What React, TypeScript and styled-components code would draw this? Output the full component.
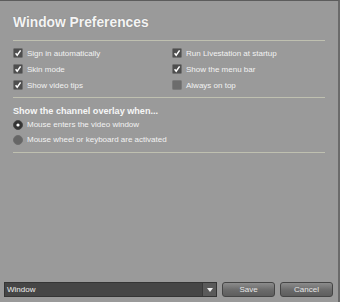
import React from "react";
import styled, { createGlobalStyle } from "styled-components";

const Global = createGlobalStyle`
  html, body { margin: 0; padding: 0; }
  body { background: #9a9a9a; font-family: "Liberation Sans", Arial, sans-serif; }
`;

const Window = styled.div`
  box-sizing: border-box;
  width: 340px;
  height: 302px;
  background: #9a9a9a;
  border-top: 1px solid #5c5c5c;
  border-right: 2px solid #6a6a6a;
  display: flex;
  flex-direction: column;
`;

const Main = styled.div`
  padding: 14px 13px 0 13px;
  display: flex;
  flex-direction: column;
`;

const Title = styled.h1`
  margin: 0;
  font-size: 13.8px;
  line-height: 16px;
  font-weight: bold;
  color: #f4f4f4;
  text-shadow: 0 0 1px rgba(90, 90, 90, 0.5);
`;

const Divider = styled.div<{ $top: number; $bottom: number }>`
  height: 1px;
  background: #bfc0b0;
  margin-top: ${(p) => p.$top}px;
  margin-bottom: ${(p) => p.$bottom}px;
`;

const Grid = styled.div`
  display: grid;
  grid-template-columns: 159px 1fr;
  grid-auto-rows: 16px;
`;

const Option = styled.div<{ $h?: number }>`
  display: flex;
  align-items: center;
  gap: 4px;
  height: ${(p) => p.$h ?? 16}px;
  font-size: 8px;
  color: #f2f2f2;
  white-space: nowrap;
`;

const Heading = styled.div`
  font-size: 9.1px;
  line-height: 11px;
  font-weight: bold;
  color: #f6f6f6;
`;

const Footer = styled.div`
  margin-top: auto;
  display: flex;
  align-items: center;
  gap: 5px;
  padding: 0 5px 5px 4px;
`;

const Select = styled.div`
  box-sizing: border-box;
  width: 213px;
  height: 15px;
  background: #464646;
  border: 1px solid #353535;
  display: flex;
  align-items: stretch;
`;

const SelectText = styled.div`
  flex: 1;
  font-size: 8px;
  line-height: 13px;
  color: #eeeeee;
  padding-left: 2px;
`;

const Arrow = styled.div`
  width: 13px;
  background: #5a5a5a;
  border-left: 1px solid #3a3a3a;
  display: flex;
  align-items: center;
  justify-content: center;
`;

const Button = styled.button`
  box-sizing: border-box;
  width: 53px;
  height: 15px;
  padding: 0;
  border: 1px solid #454545;
  border-radius: 3px;
  background: linear-gradient(#8c8c8c, #6a6a6a 55%, #5e5e5e);
  font-family: "Liberation Sans", Arial, sans-serif;
  font-size: 8px;
  color: #e6e6e6;
  line-height: 13px;
`;

const Check = ({ on }: { on: boolean }) => (
  <svg width="10" height="10" viewBox="0 0 10 10" style={{ flex: "none" }}>
    <rect x="0.5" y="0.5" width="9" height="9" rx="1" fill={on ? "#4e4e4e" : "#6c6c6c"} stroke={on ? "#6f6f6f" : "#7a7a7a"} />
    {on && <path d="M2.6 5.2 L4.2 7.2 L7.6 2.4" fill="none" stroke="#ffffff" strokeWidth="1.5" />}
  </svg>
);

const Radio = ({ on }: { on: boolean }) => (
  <svg width="10" height="10" viewBox="0 0 10 10" style={{ flex: "none" }}>
    <circle cx="5" cy="5" r="4.5" fill={on ? "#333333" : "#666666"} stroke={on ? "#4a4a4a" : "#6e6e6e"} />
    {on && <circle cx="5" cy="5" r="1.6" fill="#ffffff" />}
  </svg>
);

const checks: [string, boolean][] = [
  ["Sign in automatically", true],
  ["Run Livestation at startup", true],
  ["Skin mode", true],
  ["Show the menu bar", true],
  ["Show video tips", true],
  ["Always on top", false],
];

export default function App() {
  return (
    <>
      <Global />
      <Window>
        <Main>
          <Title>Window Preferences</Title>
          <Divider $top={9} $bottom={4} />
          <Grid>
            {checks.map(([label, on]) => (
              <Option key={label}>
                <Check on={on} />
                {label}
              </Option>
            ))}
          </Grid>
          <Divider $top={4} $bottom={8} />
          <Heading>Show the channel overlay when...</Heading>
          <Option $h={15}>
            <Radio on={true} />
            Mouse enters the video window
          </Option>
          <Option $h={15}>
            <Radio on={false} />
            Mouse wheel or keyboard are activated
          </Option>
          <Divider $top={5} $bottom={0} />
        </Main>
        <Footer>
          <Select>
            <SelectText>Window</SelectText>
            <Arrow>
              <svg width="6" height="4" viewBox="0 0 6 4">
                <path d="M0 0 L6 0 L3 4 Z" fill="#f0f0f0" />
              </svg>
            </Arrow>
          </Select>
          <Button>Save</Button>
          <Button>Cancel</Button>
        </Footer>
      </Window>
    </>
  );
}
